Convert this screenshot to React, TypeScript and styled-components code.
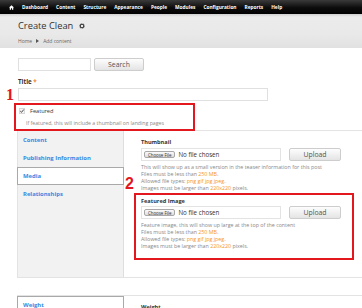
import React from 'react';
import styled, { createGlobalStyle } from 'styled-components';

const Global = createGlobalStyle`
  html, body { margin: 0; padding: 0; background: #fff; }
  body {
    width: 362px; height: 308px; overflow: hidden;
    font-family: "Open Sans", "Liberation Sans", sans-serif; color: #333;
  }
  * { box-sizing: border-box; }
`;

const Page = styled.div`
  position: relative;
  width: 362px;
  height: 308px;
  overflow: hidden;
`;

const Toolbar = styled.nav`
  display: flex;
  align-items: center;
  gap: 8px;
  height: 14px;
  padding-left: 9px;
  background: linear-gradient(#3a3a3a, #0c0c0c 55%, #000);
`;

const NavItem = styled.span`
  font-size: 4.8px;
  font-weight: 700;
  color: #fff;
  line-height: 1;
  white-space: nowrap;
`;

const Header = styled.header`
  height: 34px;
  padding: 6px 0 0 18px;
  background: linear-gradient(#cfcfcf, #ebebeb 3px, #e9e9e9 60%, #e1e1e1);
`;

const TitleRow = styled.div`
  display: flex;
  align-items: center;
  gap: 6px;
  height: 12px;
`;

const PageTitle = styled.h1`
  margin: 0;
  font-size: 9.3px;
  font-weight: 400;
  line-height: 12px;
  color: #333;
`;

const Breadcrumb = styled.div`
  display: flex;
  align-items: center;
  gap: 4px;
  margin-top: 5px;
  height: 8px;
  font-size: 5px;
  color: #666;
`;

const Crumb = styled.span``;

const CrumbArrow = styled.span`
  width: 0;
  height: 0;
  border-left: 3px solid #555;
  border-top: 2px solid transparent;
  border-bottom: 2px solid transparent;
`;

const Main = styled.main`
  padding: 10px 0 0 18px;
`;

const SearchRow = styled.div`
  display: flex;
  gap: 3px;
`;

const TextInput = styled.div<{ $w: number }>`
  width: ${p => p.$w}px;
  height: 13px;
  background: #fff;
  border: 1px solid #e0e0e0;
`;

const Button = styled.div<{ $w: number }>`
  width: ${p => p.$w}px;
  height: 13px;
  display: flex;
  align-items: center;
  justify-content: center;
  font-size: 6.9px;
  color: #555;
  background: linear-gradient(#fdfdfd, #e4e4e4);
  border: 1px solid #cdcdcd;
  border-radius: 2px;
`;

const TitleLabel = styled.div`
  margin-top: 7px;
  font-size: 6.2px;
  font-weight: 700;
  line-height: 8px;
  color: #333;
`;

const Req = styled.span`
  color: #f0883a;
`;

const TitleField = styled(TextInput)`
  margin-top: 2px;
`;

const FeaturedBox = styled.div`
  position: relative;
  z-index: 1;
  width: 181px;
  height: 28px;
  margin: 2px 0 -1px -4px;
  padding: 2px 0 0 3px;
  border: 2px solid #e3171e;
`;

const CheckRow = styled.div`
  display: flex;
  align-items: center;
  gap: 5px;
  height: 8px;
`;

const CheckLabel = styled.span`
  font-size: 5.6px;
  color: #333;
`;

const CheckDesc = styled.div`
  margin: 5px 0 0 7px;
  font-size: 5.2px;
  line-height: 7px;
  color: #888;
  white-space: nowrap;
`;

const Tabs = styled.section<{ $gap?: number }>`
  display: flex;
  margin: ${p => p.$gap ?? 0}px 0 0 -1px;
  border: 1px solid #e3e3e3;
  border-right: none;
  background: #fff;
`;

const TabList = styled.ul`
  list-style: none;
  margin: 0;
  padding: 0;
  width: 106px;
  flex: none;
  background: #f2f2f2;
  border-right: 1px solid #dedede;
`;

const Tab = styled.li<{ $active?: boolean }>`
  height: 18px;
  display: flex;
  align-items: center;
  padding-left: 5px;
  font-size: 5.9px;
  font-weight: 700;
  color: #3a88e2;
  white-space: nowrap;
  ${p => p.$active ? `
    background: #fff;
    margin: 0 -1px;
    padding-left: 5px;
    border: 1px solid #a9a9a9;
    position: relative;
  ` : ''}
`;

const Pane = styled.div<{ $pb?: number }>`
  flex: 1;
  padding: 7px 0 ${p => p.$pb ?? 17}px 17px;
`;

const FieldLabel = styled.div`
  font-size: 5.6px;
  font-weight: 700;
  line-height: 8px;
  color: #333;
`;

const FileRow = styled.div<{ $mt: number }>`
  display: flex;
  gap: 8px;
  margin-top: ${p => p.$mt}px;
`;

const FileBox = styled.div`
  width: 140px;
  height: 13px;
  display: flex;
  align-items: center;
  gap: 3px;
  padding-left: 2px;
  background: #fff;
  border: 1px solid #e3e3e3;
`;

const ChooseButton = styled.span`
  height: 7px;
  padding: 0 3px;
  display: flex;
  align-items: center;
  font-size: 4.4px;
  color: #333;
  background: linear-gradient(#fafafa, #dedede);
  border: 1px solid #a8a8a8;
  border-radius: 2px;
`;

const NoFile = styled.span`
  font-size: 6.2px;
  color: #333;
`;

const Desc = styled.div`
  margin-top: 3px;
  font-size: 5.3px;
  line-height: 7px;
  color: #888;
  white-space: nowrap;
`;

const Hl = styled.span`
  color: #f7941d;
`;

const FeaturedImageBox = styled.div`
  width: 220px;
  margin: 1px 0 0 -7px;
  padding: 2px 0 8px 5px;
  border: 2px solid #e3171e;
`;

const Marker = styled.span<{ $x: number; $y: number; $serif?: boolean }>`
  position: absolute;
  left: ${p => p.$x}px;
  top: ${p => p.$y}px;
  font-family: ${p => p.$serif ? '"Liberation Serif", serif' : '"Liberation Sans", sans-serif'};
  font-size: 16px;
  font-weight: 700;
  line-height: 1;
  color: #e3171e;
`;

const HomeIcon = () => (
  <svg width="5" height="5" viewBox="0 0 10 10">
    <path d="M5 0.5 L10 5 H8.5 V9.5 H6 V6.5 H4 V9.5 H1.5 V5 H0 Z" fill="#fff" />
  </svg>
);

const GearIcon = () => (
  <svg width="6" height="6" viewBox="0 0 12 12">
    <circle cx="6" cy="6" r="3.6" fill="none" stroke="#333" strokeWidth="2.2" />
    <circle cx="6" cy="6" r="5.2" fill="none" stroke="#333" strokeWidth="1" strokeDasharray="1.6 1.6" />
  </svg>
);

const CheckBox = () => (
  <svg width="6" height="6" viewBox="0 0 12 12">
    <rect x="0.5" y="0.5" width="11" height="11" rx="2" fill="#f4f4f4" stroke="#a0a0a0" />
    <path d="M2.5 6.2 L5 8.6 L9.6 3" fill="none" stroke="#333" strokeWidth="1.8" />
  </svg>
);

const navItems = ['Dashboard', 'Content', 'Structure', 'Appearance', 'People', 'Modules', 'Configuration', 'Reports', 'Help'];

const FileField = ({ mt }: { mt: number }) => (
  <FileRow $mt={mt}>
    <FileBox>
      <ChooseButton>Choose File</ChooseButton>
      <NoFile>No file chosen</NoFile>
    </FileBox>
    <Button $w={52}>Upload</Button>
  </FileRow>
);

const Limits = () => (
  <>
    Files must be less than <Hl>250 MB</Hl>.<br />
    Allowed file types: <Hl>png gif jpg jpeg</Hl>.<br />
    Images must be larger than <Hl>220x220</Hl> pixels.
  </>
);

export default function App() {
  return (
    <Page>
      <Global />
      <Toolbar>
        <HomeIcon />
        {navItems.map(n => <NavItem key={n}>{n}</NavItem>)}
      </Toolbar>
      <Header>
        <TitleRow>
          <PageTitle>Create Clean</PageTitle>
          <GearIcon />
        </TitleRow>
        <Breadcrumb>
          <Crumb>Home</Crumb>
          <CrumbArrow />
          <Crumb>Add content</Crumb>
        </Breadcrumb>
      </Header>
      <Main>
        <SearchRow>
          <TextInput $w={73} />
          <Button $w={50}>Search</Button>
        </SearchRow>
        <TitleLabel>Title <Req>*</Req></TitleLabel>
        <TitleField $w={250} />
        <FeaturedBox>
          <CheckRow>
            <CheckBox />
            <CheckLabel>Featured</CheckLabel>
          </CheckRow>
          <CheckDesc>If featured, this will include a thumbnail on landing pages</CheckDesc>
        </FeaturedBox>
        <Tabs>
          <TabList>
            <Tab>Content</Tab>
            <Tab>Publishing Information</Tab>
            <Tab $active>Media</Tab>
            <Tab>Relationships</Tab>
          </TabList>
          <Pane>
            <FieldLabel>Thumbnail</FieldLabel>
            <FileField mt={2} />
            <Desc>
              This will show up as a small version in the teaser information for this post<br />
              <Limits />
            </Desc>
            <FeaturedImageBox>
              <FieldLabel>Featured Image</FieldLabel>
              <FileField mt={1} />
              <Desc>
                Feature image, this will show up large at the top of the content<br />
                <Limits />
              </Desc>
            </FeaturedImageBox>
          </Pane>
        </Tabs>
        <Tabs $gap={17}>
          <TabList>
            <Tab $active>Weight</Tab>
          </TabList>
          <Pane $pb={20}>
            <FieldLabel>Weight</FieldLabel>
          </Pane>
        </Tabs>
      </Main>
      <Marker $x={6} $y={87} $serif>1</Marker>
      <Marker $x={125} $y={176}>2</Marker>
    </Page>
  );
}
